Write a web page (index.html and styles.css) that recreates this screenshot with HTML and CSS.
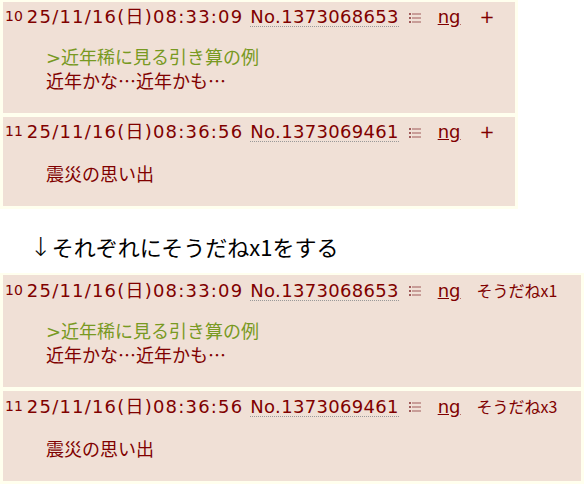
FILE: index.html
```html
<html lang="ja">
<head>
    <meta charset="UTF-8">
    <title>そうだね</title>
    <link rel="stylesheet" href="styles.css">
</head>
<body>

    <div class="shot narrow">
        <div class="res">
            <div class="head">
                <span class="num">10</span>
                <span class="date">25/11/16(日)08:33:09</span>
                <span class="no">No.1373068653</span>
                <svg class="menu" width="12" height="10" viewBox="0 0 12 10"><rect x="0" y="0" width="2" height="2"/><rect x="3" y="0.5" width="9" height="1"/><rect x="0" y="4" width="2" height="2"/><rect x="3" y="4.5" width="9" height="1"/><rect x="0" y="8" width="2" height="2"/><rect x="3" y="8.5" width="9" height="1"/></svg>
                <span class="ng">ng</span>
                <span class="plus">+</span>
            </div>
            <blockquote>
                <span class="quote">&gt;近年稀に見る引き算の例</span><br>
                近年かな…近年かも…
            </blockquote>
        </div>
        <div class="res">
            <div class="head">
                <span class="num">11</span>
                <span class="date">25/11/16(日)08:36:56</span>
                <span class="no">No.1373069461</span>
                <svg class="menu" width="12" height="10" viewBox="0 0 12 10"><rect x="0" y="0" width="2" height="2"/><rect x="3" y="0.5" width="9" height="1"/><rect x="0" y="4" width="2" height="2"/><rect x="3" y="4.5" width="9" height="1"/><rect x="0" y="8" width="2" height="2"/><rect x="3" y="8.5" width="9" height="1"/></svg>
                <span class="ng">ng</span>
                <span class="plus">+</span>
            </div>
            <blockquote>震災の思い出</blockquote>
        </div>
    </div>

    <p class="note"><span class="arrow">↓</span>それぞれにそうだねx1をする</p>

    <div class="shot wide">
        <div class="res">
            <div class="head">
                <span class="num">10</span>
                <span class="date">25/11/16(日)08:33:09</span>
                <span class="no">No.1373068653</span>
                <svg class="menu" width="12" height="10" viewBox="0 0 12 10"><rect x="0" y="0" width="2" height="2"/><rect x="3" y="0.5" width="9" height="1"/><rect x="0" y="4" width="2" height="2"/><rect x="3" y="4.5" width="9" height="1"/><rect x="0" y="8" width="2" height="2"/><rect x="3" y="8.5" width="9" height="1"/></svg>
                <span class="ng">ng</span>
                <span class="sod">そうだねx1</span>
            </div>
            <blockquote>
                <span class="quote">&gt;近年稀に見る引き算の例</span><br>
                近年かな…近年かも…
            </blockquote>
        </div>
        <div class="res">
            <div class="head">
                <span class="num">11</span>
                <span class="date">25/11/16(日)08:36:56</span>
                <span class="no">No.1373069461</span>
                <svg class="menu" width="12" height="10" viewBox="0 0 12 10"><rect x="0" y="0" width="2" height="2"/><rect x="3" y="0.5" width="9" height="1"/><rect x="0" y="4" width="2" height="2"/><rect x="3" y="4.5" width="9" height="1"/><rect x="0" y="8" width="2" height="2"/><rect x="3" y="8.5" width="9" height="1"/></svg>
                <span class="ng">ng</span>
                <span class="sod">そうだねx3</span>
            </div>
            <blockquote>震災の思い出</blockquote>
        </div>
    </div>

</body>
</html>
```

FILE: styles.css
```css
* {
    font-family: "DejaVu Sans", "Noto Sans CJK JP", sans-serif;
}

body {
    margin: 0;
    background: #ffffff;
    color: #800000;
}

.shot {
    background: #ffffee;
    padding: 2px 3px 3px 3px;
    display: flex;
    flex-direction: column;
    gap: 4px;
}

.narrow {
    width: 512px;
}

.wide {
    width: 578px;
    margin-top: 12px;
}

.res {
    background: #f0e0d6;
    padding: 4px 2px 0 2px;
}

.head {
    display: flex;
    align-items: baseline;
    font-size: 18px;
    line-height: 22px;
    white-space: nowrap;
}

.num {
    font-size: 14px;
    margin-right: 4px;
    position: relative;
    top: -2px;
}

.date {
    letter-spacing: 1.2px;
    margin-right: 7px;
}

.no {
    letter-spacing: 0.3px;
    border-bottom: 1px dotted #999;
    line-height: 18px;
}

.menu {
    fill: #a05a5a;
    margin: 0 17px 0 10px;
    align-self: center;
}

.ng {
    text-decoration: underline;
    margin-right: 16px;
}

.plus {
    margin-left: 3px;
}

.sod {
    font-family: "Noto Sans CJK JP", sans-serif;
    font-size: 16px;
}

blockquote {
    margin: 18px 40px 22px 41px;
    font-family: "Noto Sans CJK JP", sans-serif;
    font-size: 18px;
    line-height: 22px;
}

.quote {
    color: #789922;
}

.note {
    margin: 23px 0 0 30px;
    font-family: "Noto Sans CJK JP", sans-serif;
    font-size: 22px;
    color: #000;
    line-height: 28px;
}

.arrow {
    font-family: "DejaVu Sans", sans-serif;
    font-size: 26px;
    font-weight: 200;
}
```
